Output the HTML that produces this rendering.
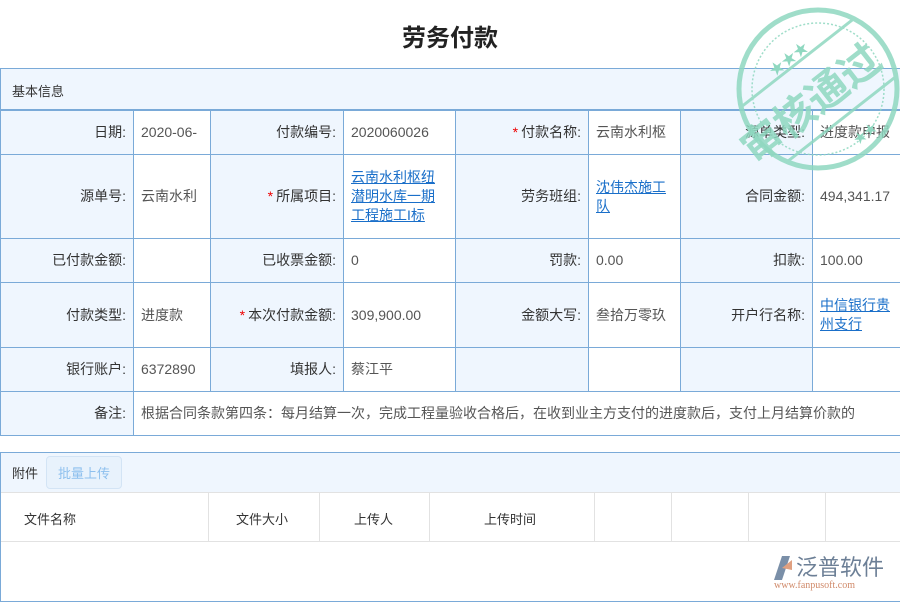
<!DOCTYPE html>
<html><head><meta charset="utf-8"><style>
*{margin:0;padding:0;box-sizing:border-box}
body{width:900px;height:600px;background:#fff;position:relative;overflow:hidden;font-family:"Liberation Sans","Noto Sans CJK SC",sans-serif;font-size:14px;color:#333}
h1{position:absolute;top:18px;left:0;width:900px;text-align:center;font-size:24px;font-weight:bold;color:#222}
.sec{position:absolute;left:0;top:68px;width:902px;height:42px;background:#eff6fe;border:1px solid #7aaad8;padding:12px 11px;font-size:13px}
table{position:absolute;left:0;top:110px;border-collapse:collapse;table-layout:fixed;width:901px}
td{border:1px solid #7aaad8;padding:0 7px;vertical-align:middle;line-height:19px}
td.l{background:#eff6fe;text-align:right;color:#333}
td.v{color:#555}
.s{color:#e00;margin-right:3px}
a{color:#1a6fc9;text-decoration:underline}
.att{position:absolute;left:0;top:452px;width:902px;height:150px;border:1px solid #7aaad8;border-right:none}
.ah{height:40px;background:#eff6fe;border-bottom:1px solid #e2e2e2;padding:0 11px;display:flex;align-items:center;font-size:13px}
.btn{margin-left:8px;border:1px solid #d3e4f5;background:#e8f2fc;color:#8ec0ee;border-radius:4px;padding:6px 11px;font-size:13px}
.th{position:relative;height:49px;border-bottom:1px solid #e2e2e2}
.th span{position:absolute;top:16px;font-size:13px;color:#333}
.th i{position:absolute;top:0;height:49px;border-left:1px solid #e2e2e2}
</style></head><body>
<h1>劳务付款</h1>
<div class="sec">基本信息</div>
<table>
<colgroup><col style="width:133px"><col style="width:77px"><col style="width:133px"><col style="width:112px"><col style="width:133px"><col style="width:92px"><col style="width:132px"><col style="width:89px"></colgroup>
<tr style="height:44px"><td class="l">日期:</td><td class="v" style="white-space:nowrap;overflow:hidden">2020-06-</td><td class="l">付款编号:</td><td class="v">2020060026</td><td class="l"><span class="s">*</span>付款名称:</td><td class="v" style="white-space:nowrap;overflow:hidden">云南水利枢</td><td class="l">源单类型:</td><td class="v" style="white-space:nowrap;overflow:hidden">进度款申报</td></tr>
<tr style="height:84px"><td class="l">源单号:</td><td class="v">云南水利</td><td class="l"><span class="s">*</span>所属项目:</td><td class="v"><a>云南水利枢纽潜明水库一期工程施工I标</a></td><td class="l">劳务班组:</td><td class="v"><a>沈伟杰施工队</a></td><td class="l">合同金额:</td><td class="v">494,341.17</td></tr>
<tr style="height:44px"><td class="l">已付款金额:</td><td class="v"></td><td class="l">已收票金额:</td><td class="v">0</td><td class="l">罚款:</td><td class="v">0.00</td><td class="l">扣款:</td><td class="v">100.00</td></tr>
<tr style="height:65px"><td class="l">付款类型:</td><td class="v">进度款</td><td class="l"><span class="s">*</span>本次付款金额:</td><td class="v">309,900.00</td><td class="l">金额大写:</td><td class="v">叁拾万零玖</td><td class="l">开户行名称:</td><td class="v"><a>中信银行贵州支行</a></td></tr>
<tr style="height:44px"><td class="l">银行账户:</td><td class="v">6372890</td><td class="l">填报人:</td><td class="v">蔡江平</td><td class="l"></td><td class="v"></td><td class="l"></td><td class="v"></td></tr>
<tr style="height:44px"><td class="l">备注:</td><td class="v" colspan="7" style="white-space:nowrap;overflow:hidden">根据合同条款第四条：每月结算一次，完成工程量验收合格后，在收到业主方支付的进度款后，支付上月结算价款的</td></tr>
</table>
<div class="att">
<div class="ah">附件<span class="btn">批量上传</span></div>
<div class="th">
<span style="left:23px">文件名称</span><i style="left:207px"></i>
<span style="left:235px">文件大小</span><i style="left:318px"></i>
<span style="left:353px">上传人</span><i style="left:428px"></i>
<span style="left:483px">上传时间</span><i style="left:593px"></i><i style="left:670px"></i><i style="left:747px"></i><i style="left:824px"></i>
</div>
</div>
<svg style="position:absolute;left:736px;top:7px" width="166" height="166" viewBox="0 0 166 166">
<defs><clipPath id="c"><circle cx="82" cy="82" r="79"/></clipPath></defs>
<g fill="none" stroke="#8fd8c0" opacity="0.85">
<circle cx="82" cy="82" r="79" stroke-width="5"/>
<circle cx="82" cy="82" r="66" stroke-width="1.5" stroke-dasharray="2 2"/>
<g clip-path="url(#c)" stroke-width="3">
<line x1="0" y1="104" x2="166" y2="-26"/>
<line x1="24" y1="176" x2="190" y2="46"/>
</g>
</g>
<text x="0" y="0" text-anchor="middle" transform="translate(84,108) rotate(-38)" font-size="41" font-weight="bold" fill="#8fd8c0" opacity="0.85" font-family="Noto Sans CJK SC,sans-serif">审核通过</text>
<text x="0" y="0" text-anchor="middle" transform="translate(56,56) rotate(-38)" font-size="15" fill="#8fd8c0">★★★</text>
<text x="0" y="0" text-anchor="middle" transform="translate(132,130) rotate(-38)" font-size="13" fill="#8fd8c0">★★</text>
</svg>
<div style="position:absolute;left:770px;top:552px;width:125px;height:40px">
<svg width="24" height="28" style="position:absolute;left:0;top:2px"><path d="M4 26 L12 2 L20 2 L12 26Z" fill="#7a8fa8"/><path d="M12 14 L22 6 L22 16Z" fill="#e0a080"/></svg>
<span style="position:absolute;left:26px;top:0;font-size:22px;color:#6c7f96;font-family:'Noto Sans CJK SC',sans-serif;line-height:28px">泛普软件</span>
<span style="position:absolute;left:4px;top:28px;font-size:10px;color:#d08a6a;font-family:'Liberation Serif',serif">www.fanpusoft.com</span>
</div>
</body></html>
